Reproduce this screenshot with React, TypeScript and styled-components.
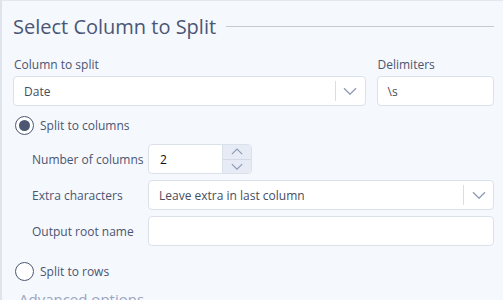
import React from 'react';
import styled, { createGlobalStyle } from 'styled-components';

const GlobalStyle = createGlobalStyle`
  html, body {
    margin: 0;
    padding: 0;
    background: #f5f8fd;
    overflow: hidden;
  }
  * { box-sizing: border-box; }
`;

const Panel = styled.div`
  width: 503px;
  height: 300px;
  background: #f5f8fd;
  border-left: 2px solid #dfe4ec;
  border-top: 1px solid #e3e7ee;
  padding: 10px 9px 0 11px;
  font-family: 'Open Sans', 'Noto Sans', sans-serif;
  color: #4a5570;
  overflow: hidden;
`;

const Heading = styled.div`
  display: flex;
  align-items: center;
  gap: 10px;
  height: 30px;
`;

const Title = styled.h2`
  margin: 0;
  font-size: 20px;
  font-weight: 400;
  color: #4b5675;
  white-space: nowrap;
`;

const Rule = styled.div`
  flex: 1;
  height: 1px;
  background: #c6ccd6;
`;

const TopRow = styled.div`
  display: flex;
  gap: 11px;
  margin-top: 15px;
`;

const Field = styled.div<{ $width: number }>`
  width: ${p => p.$width}px;
  display: flex;
  flex-direction: column;
  gap: 3px;
`;

const Label = styled.label`
  font-size: 12px;
  line-height: 17px;
  color: #4a5570;
  padding-left: 1px;
`;

const Box = styled.div<{ $width?: number }>`
  height: 30px;
  flex: ${p => (p.$width ? `0 0 ${p.$width}px` : '1 1 auto')};
  align-self: stretch;
  background: #fff;
  border: 1px solid #dbe1eb;
  border-radius: 4px;
  display: flex;
  align-items: center;
  font-size: 12px;
  color: #454d60;
  overflow: hidden;
`;

const FieldBox = styled(Box)`
  flex: 0 0 30px;
`;

const BoxText = styled.span`
  flex: 1;
  padding-left: 10px;
`;

const Divider = styled.div`
  width: 1px;
  align-self: stretch;
  margin: 4px 0;
  background: #d8dee8;
`;

const Chevron = styled.div`
  width: 29px;
  display: flex;
  align-items: center;
  justify-content: center;
`;

const RadioRow = styled.div<{ $top: number }>`
  display: flex;
  align-items: center;
  gap: 6px;
  margin-top: ${p => p.$top}px;
  padding-left: 2px;
  font-size: 12px;
  color: #4a5570;
`;

const RadioCircle = styled.span<{ $on?: boolean }>`
  width: 19px;
  height: 19px;
  border-radius: 50%;
  border: 1.5px solid #4d5772;
  background: #fff;
  display: flex;
  align-items: center;
  justify-content: center;
  &::after {
    content: '';
    width: 11px;
    height: 11px;
    border-radius: 50%;
    background: ${p => (p.$on ? '#4d5772' : 'transparent')};
  }
`;

const Options = styled.div`
  display: flex;
  flex-direction: column;
  gap: 6px;
  margin-top: 9px;
  padding-left: 19px;
`;

const OptionRow = styled.div`
  display: flex;
  align-items: center;
`;

const OptionLabel = styled.span`
  width: 116px;
  flex: 0 0 116px;
  font-size: 12px;
  color: #4a5570;
`;

const Spinner = styled.div`
  width: 29px;
  align-self: stretch;
  background: #e6ebf5;
  border-left: 1px solid #dbe1eb;
  display: flex;
  flex-direction: column;
`;

const SpinHalf = styled.div`
  flex: 1;
  display: flex;
  align-items: center;
  justify-content: center;
  & + & { border-top: 1px solid #d3dae6; }
`;

const NumberText = styled.span`
  flex: 1;
  padding-left: 11px;
  color: #111;
`;

const Advanced = styled.div`
  margin-top: 8px;
  padding-left: 6px;
  font-size: 15px;
  color: #9aa5bf;
`;

const ChevronIcon = ({ up, size = 14 }: { up?: boolean; size?: number }) => (
  <svg width={size} height={size * 0.6} viewBox="0 0 14 8" fill="none">
    <path
      d={up ? 'M1 7 L7 1 L13 7' : 'M1 1 L7 7 L13 1'}
      stroke="#8d9ab5"
      strokeWidth="1.3"
    />
  </svg>
);

export default function App() {
  return (
    <>
      <GlobalStyle />
      <Panel>
        <Heading>
          <Title>Select Column to Split</Title>
          <Rule />
        </Heading>

        <TopRow>
          <Field $width={354}>
            <Label>Column to split</Label>
            <FieldBox>
              <BoxText>Date</BoxText>
              <Divider />
              <Chevron>
                <ChevronIcon />
              </Chevron>
            </FieldBox>
          </Field>
          <Field $width={118}>
            <Label>Delimiters</Label>
            <FieldBox>
              <BoxText>\s</BoxText>
            </FieldBox>
          </Field>
        </TopRow>

        <RadioRow $top={10}>
          <RadioCircle $on />
          Split to columns
        </RadioRow>

        <Options>
          <OptionRow>
            <OptionLabel>Number of columns</OptionLabel>
            <Box $width={104}>
              <NumberText>2</NumberText>
              <Spinner>
                <SpinHalf>
                  <ChevronIcon up size={12} />
                </SpinHalf>
                <SpinHalf>
                  <ChevronIcon size={12} />
                </SpinHalf>
              </Spinner>
            </Box>
          </OptionRow>
          <OptionRow>
            <OptionLabel>Extra characters</OptionLabel>
            <Box>
              <BoxText>Leave extra in last column</BoxText>
              <Divider />
              <Chevron>
                <ChevronIcon />
              </Chevron>
            </Box>
          </OptionRow>
          <OptionRow>
            <OptionLabel>Output root name</OptionLabel>
            <Box />
          </OptionRow>
        </Options>

        <RadioRow $top={16}>
          <RadioCircle />
          Split to rows
        </RadioRow>

        <Advanced>Advanced options</Advanced>
      </Panel>
    </>
  );
}
